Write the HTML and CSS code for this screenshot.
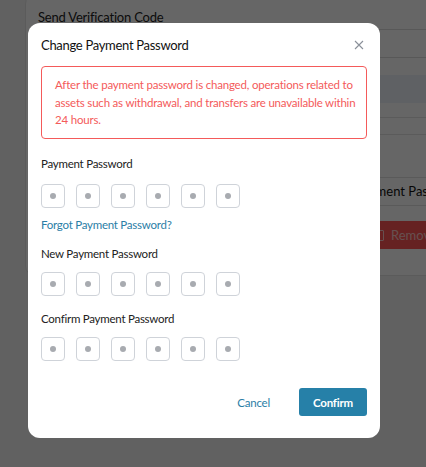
FILE: index.html
```html
<!DOCTYPE html>
<html>
<head>
<meta charset="utf-8">
<link rel="stylesheet" href="styles.css">
</head>
<body>
<div class="page">
  <div class="card">
    <div class="bg-label">Send Verification Code</div>
    <div class="bg-input"></div>
    <div class="bg-band"></div>
    <div class="bg-line l1"></div>
    <div class="bg-line l2"></div>
    <div class="bg-field"><span>Payment Password</span></div>
    <div class="bg-btn"><span class="ic"></span>Remove</div>
  </div>
</div>
<div class="overlay">
  <div class="dialog">
    <div class="head">
      <span class="title">Change Payment Password</span>
      <svg class="close" width="10" height="10" viewBox="0 0 10 10"><path d="M1 1L9 9M9 1L1 9" stroke="#8a9099" stroke-width="1.1" fill="none"/></svg>
    </div>
    <div class="alert">After the payment password is changed, operations related to assets such as withdrawal, and transfers are unavailable within 24 hours.</div>
    <div class="label first">Payment Password</div>
    <div class="pins first"><span></span><span></span><span></span><span></span><span></span><span></span></div>
    <a class="forgot">Forgot Payment Password?</a>
    <div class="label">New Payment Password</div>
    <div class="pins"><span></span><span></span><span></span><span></span><span></span><span></span></div>
    <div class="label">Confirm Payment Password</div>
    <div class="pins"><span></span><span></span><span></span><span></span><span></span><span></span></div>
    <div class="foot">
      <button class="cancel">Cancel</button>
      <button class="confirm">Confirm</button>
    </div>
  </div>
</div>
</body>
</html>
```
FILE: styles.css
```css
* { box-sizing: border-box; }
html, body { margin: 0; height: 100%; overflow: hidden; }
body {
  background: #f2f3f3;
  font-family: Lato, "Noto Sans", sans-serif;
  color: #222;
}
.page { padding-left: 25px; }
.card {
  margin-top: -6px;
  width: 520px;
  height: 282px;
  background: #fff;
  border: 1px solid #e4e4e4;
  border-radius: 10px;
  padding: 14px 0 0 12px;
  display: flex;
  flex-direction: column;
}
.bg-label { font-size: 13px; line-height: 16px; color: #222; letter-spacing: -0.2px; }
.bg-input { margin-top: 4px; height: 29px; border: 1px solid #ddd; border-radius: 3px; }
.bg-band { margin-top: 17px; height: 28px; background: #eef3f9; }
.bg-line { height: 1px; background: #e3e3e3; }
.l1 { margin-top: 14px; }
.l2 { margin-top: 16px; }
.bg-field {
  margin-top: 42px; height: 29px; border: 1px solid #e0e0e0; background: #fff;
  font-size: 13px; line-height: 27px; padding-left: 316px; color: #111; white-space: nowrap;
}
.bg-btn {
  margin-top: 15px; height: 28px; margin-left: 250px; background: #ff5555;
  color: #ffc8c8; font-size: 13px; line-height: 28px; padding-left: 88px;
  display: flex; align-items: center; gap: 7px; white-space: nowrap;
}
.bg-btn .ic { width: 8px; height: 11px; border: 1.5px solid #ffc8c8; border-radius: 1px; }
.overlay {
  position: fixed; inset: 0;
  background: rgba(0,0,0,0.6);
  padding: 23px 0 0 28px;
}
.dialog {
  width: 352px;
  height: 415px;
  background: #fff;
  border-radius: 12px;
  padding: 13px 13px 0 13px;
  display: flex;
  flex-direction: column;
}
.head { display: flex; align-items: center; justify-content: space-between; height: 17px; padding-right: 3px; }
.title { font-size: 13px; letter-spacing: -0.3px; color: #111; }
.close { display: block; }
.alert {
  margin-top: 13px;
  border: 1px solid #f45a5a;
  border-radius: 4px;
  color: #f45a5a;
  font-size: 11.5px;
  letter-spacing: -0.2px;
  line-height: 17.5px;
  padding: 9px 8px 9px 13px;
}
.label { font-size: 11.5px; letter-spacing: -0.25px; line-height: 16px; color: #222; margin-top: 15px; }
.label.first { margin-top: 17px; }
.pins { display: flex; gap: 11px; margin-top: 10px; }
.pins.first { margin-top: 12px; }
.pins span {
  width: 24px; height: 24px; border: 1px solid #cfd3d9; border-radius: 4px;
  display: flex; align-items: center; justify-content: center;
}
.pins span::after { content: ""; width: 6px; height: 6px; border-radius: 50%; background: #a8abb0; }
.forgot { font-size: 11.5px; letter-spacing: -0.25px; line-height: 16px; color: #2b7ea6; margin-top: 9px; margin-bottom: -2px; }
.foot { margin-top: auto; margin-bottom: 22px; display: flex; justify-content: flex-end; align-items: center; gap: 29px; }
.cancel, .confirm { font-family: inherit; font-size: 11.5px; letter-spacing: -0.2px; border: none; cursor: pointer; }
.cancel { background: none; color: #2b7ea6; padding: 0; }
.confirm { background: #2680a8; color: #fff; width: 68px; height: 28px; border-radius: 3px; font-weight: bold; }
```
